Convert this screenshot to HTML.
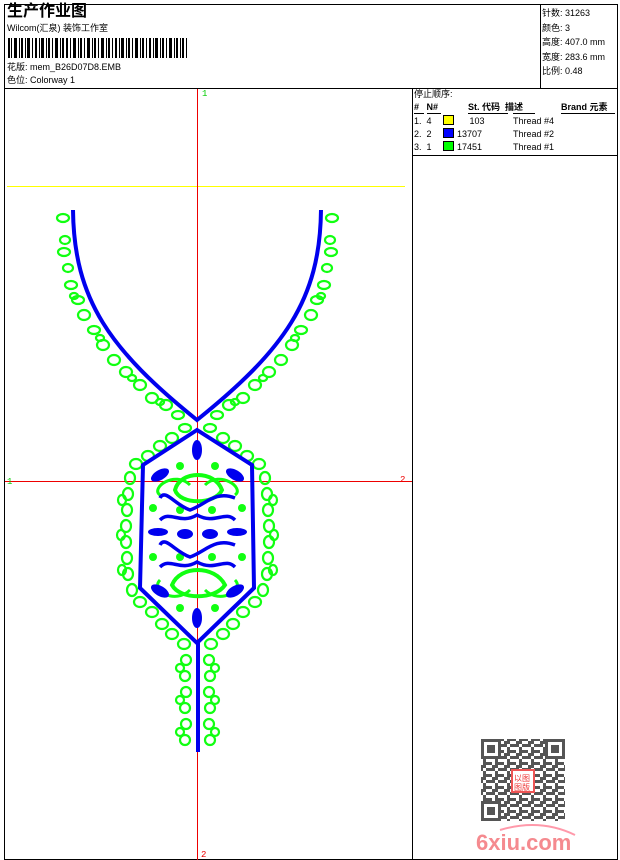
<!DOCTYPE html>
<html><head><meta charset="utf-8"><style>
body{margin:0;background:#fff;width:620px;height:860px;position:relative;overflow:hidden;font-family:"Liberation Sans","Noto Sans CJK SC",sans-serif;color:#000}
.a{position:absolute;white-space:nowrap;font-size:9px;line-height:11px}
</style></head><body>
<svg width="620" height="860" style="position:absolute;left:0;top:0">
<defs>
<pattern id="qr" x="0" y="0" width="12" height="12" patternUnits="userSpaceOnUse">
<rect x="0" y="0" width="3" height="3" fill="#555"/><rect x="6" y="0" width="6" height="3" fill="#555"/><rect x="3" y="3" width="3" height="6" fill="#555"/><rect x="9" y="6" width="3" height="3" fill="#555"/><rect x="0" y="9" width="6" height="3" fill="#555"/><rect x="6" y="6" width="3" height="3" fill="#555"/>
</pattern>
</defs>
<rect x="4.5" y="4.5" width="613" height="855" fill="none" stroke="#000"/>
<line x1="4" y1="88.5" x2="618" y2="88.5" stroke="#000"/>
<line x1="540.5" y1="4" x2="540.5" y2="88" stroke="#000"/>
<line x1="412.5" y1="88" x2="412.5" y2="860" stroke="#000"/>
<line x1="412" y1="155.5" x2="618" y2="155.5" stroke="#000"/>
<line x1="7" y1="186.5" x2="405" y2="186.5" stroke="#ff0" />
<line x1="197.5" y1="89" x2="197.5" y2="860" stroke="#e00"/>
<line x1="5" y1="481.5" x2="412" y2="481.5" stroke="#e00"/>
<g fill="#000">
<rect x="8" y="38" width="2" height="20"/><rect x="11" y="38" width="1" height="20"/><rect x="14" y="38" width="3" height="20"/><rect x="19" y="38" width="1" height="20"/><rect x="21" y="38" width="2" height="20"/><rect x="25" y="38" width="1" height="20"/><rect x="27" y="38" width="3" height="20"/><rect x="32" y="38" width="1" height="20"/><rect x="35" y="38" width="2" height="20"/><rect x="39" y="38" width="1" height="20"/><rect x="41" y="38" width="3" height="20"/><rect x="46" y="38" width="1" height="20"/><rect x="48" y="38" width="2" height="20"/><rect x="52" y="38" width="1" height="20"/><rect x="55" y="38" width="3" height="20"/><rect x="60" y="38" width="1" height="20"/><rect x="62" y="38" width="2" height="20"/><rect x="66" y="38" width="2" height="20"/><rect x="70" y="38" width="1" height="20"/><rect x="73" y="38" width="3" height="20"/><rect x="78" y="38" width="1" height="20"/><rect x="80" y="38" width="2" height="20"/><rect x="84" y="38" width="1" height="20"/><rect x="87" y="38" width="3" height="20"/><rect x="92" y="38" width="1" height="20"/><rect x="94" y="38" width="2" height="20"/><rect x="98" y="38" width="1" height="20"/><rect x="101" y="38" width="3" height="20"/><rect x="106" y="38" width="1" height="20"/><rect x="108" y="38" width="2" height="20"/><rect x="112" y="38" width="1" height="20"/><rect x="115" y="38" width="2" height="20"/><rect x="119" y="38" width="1" height="20"/><rect x="121" y="38" width="3" height="20"/><rect x="126" y="38" width="1" height="20"/><rect x="128" y="38" width="2" height="20"/><rect x="132" y="38" width="1" height="20"/><rect x="135" y="38" width="3" height="20"/><rect x="140" y="38" width="1" height="20"/><rect x="142" y="38" width="2" height="20"/><rect x="146" y="38" width="1" height="20"/><rect x="149" y="38" width="2" height="20"/><rect x="153" y="38" width="1" height="20"/><rect x="155" y="38" width="3" height="20"/><rect x="160" y="38" width="1" height="20"/><rect x="162" y="38" width="2" height="20"/><rect x="166" y="38" width="1" height="20"/><rect x="169" y="38" width="3" height="20"/><rect x="174" y="38" width="1" height="20"/><rect x="176" y="38" width="2" height="20"/><rect x="180" y="38" width="1" height="20"/><rect x="182" y="38" width="2" height="20"/><rect x="186" y="38" width="1" height="20"/>
</g>
<rect x="443.5" y="115.5" width="10" height="9" fill="#ff0" stroke="#000"/>
<rect x="443.5" y="128.5" width="10" height="9" fill="#00f" stroke="#000"/>
<rect x="443.5" y="141.5" width="10" height="9" fill="#0f0" stroke="#000"/>
<line x1="414" y1="113.5" x2="424" y2="113.5" stroke="#000"/>
<line x1="427" y1="113.5" x2="441" y2="113.5" stroke="#000"/>
<line x1="468" y1="113.5" x2="508" y2="113.5" stroke="#000"/>
<line x1="513" y1="113.5" x2="535" y2="113.5" stroke="#000"/>
<line x1="561" y1="113.5" x2="615" y2="113.5" stroke="#000"/>
<text x="202" y="96" font-size="9" fill="#0c0" font-family="Liberation Mono">1</text>
<text x="201" y="857" font-size="9" fill="#e00" font-family="Liberation Mono">2</text>
<text x="7" y="484" font-size="9" fill="#0c0" font-family="Liberation Mono">1</text>
<text x="400" y="482" font-size="9" fill="#e00" font-family="Liberation Mono">2</text>
<g fill="none" stroke="#1f1" stroke-width="2.2">
<g id="L">
<ellipse cx="63" cy="218" rx="6" ry="4"/><ellipse cx="65" cy="240" rx="5" ry="4"/><ellipse cx="64" cy="252" rx="6" ry="4"/><ellipse cx="68" cy="268" rx="5" ry="4"/><ellipse cx="71" cy="285" rx="6" ry="4"/><ellipse cx="78" cy="300" rx="6" ry="4"/><ellipse cx="84" cy="315" rx="6" ry="5"/><ellipse cx="94" cy="330" rx="6" ry="4"/><ellipse cx="103" cy="345" rx="6" ry="5"/><ellipse cx="114" cy="360" rx="6" ry="5"/><ellipse cx="126" cy="372" rx="6" ry="5"/><ellipse cx="140" cy="385" rx="6" ry="5"/><ellipse cx="152" cy="398" rx="6" ry="5"/><ellipse cx="166" cy="405" rx="6" ry="5"/><ellipse cx="178" cy="415" rx="6" ry="4"/>
<ellipse cx="74" cy="296" rx="4" ry="3"/><ellipse cx="100" cy="338" rx="4" ry="3"/><ellipse cx="132" cy="378" rx="4" ry="3"/><ellipse cx="160" cy="402" rx="4" ry="3"/>
</g>
<use href="#L" transform="translate(395,0) scale(-1,1)"/>
<g id="P">
<ellipse cx="185" cy="428" rx="6" ry="4"/><ellipse cx="172" cy="438" rx="6" ry="5"/><ellipse cx="160" cy="446" rx="6" ry="5"/><ellipse cx="148" cy="456" rx="6" ry="5"/><ellipse cx="136" cy="464" rx="6" ry="5"/><ellipse cx="130" cy="478" rx="5" ry="6"/><ellipse cx="128" cy="494" rx="5" ry="6"/><ellipse cx="127" cy="510" rx="5" ry="6"/><ellipse cx="126" cy="526" rx="5" ry="6"/><ellipse cx="126" cy="542" rx="5" ry="6"/><ellipse cx="127" cy="558" rx="5" ry="6"/><ellipse cx="128" cy="574" rx="5" ry="6"/><ellipse cx="132" cy="590" rx="5" ry="6"/><ellipse cx="140" cy="602" rx="6" ry="5"/><ellipse cx="152" cy="612" rx="6" ry="5"/><ellipse cx="162" cy="624" rx="6" ry="5"/><ellipse cx="172" cy="634" rx="6" ry="5"/><ellipse cx="184" cy="644" rx="6" ry="5"/>
<ellipse cx="186" cy="660" rx="5" ry="5"/><ellipse cx="185" cy="676" rx="5" ry="5"/><ellipse cx="186" cy="692" rx="5" ry="5"/><ellipse cx="185" cy="708" rx="5" ry="5"/><ellipse cx="186" cy="724" rx="5" ry="5"/><ellipse cx="185" cy="740" rx="5" ry="5"/>
<ellipse cx="122" cy="500" rx="4" ry="5"/><ellipse cx="121" cy="535" rx="4" ry="5"/><ellipse cx="122" cy="570" rx="4" ry="5"/><ellipse cx="180" cy="668" rx="4" ry="4"/><ellipse cx="180" cy="700" rx="4" ry="4"/><ellipse cx="180" cy="732" rx="4" ry="4"/>
</g>
<use href="#P" transform="translate(395,0) scale(-1,1)"/>
<path d="M175 490 C180 470 215 470 222 490 C215 505 180 505 175 490 Z" stroke-width="4"/>
<path d="M172 585 C180 565 215 565 225 585 C215 600 180 600 172 585 Z" stroke-width="4"/>
<path d="M160 495 C150 488 175 470 190 485 M235 495 C245 488 220 470 205 485 M160 580 C150 590 175 605 190 590 M235 580 C245 590 220 605 205 590" stroke-width="3"/>
</g>
<g fill="#1f1"><circle cx="180" cy="466" r="4"/><circle cx="215" cy="466" r="4"/><circle cx="153" cy="508" r="4"/><circle cx="242" cy="508" r="4"/><circle cx="180" cy="510" r="4"/><circle cx="212" cy="510" r="4"/><circle cx="153" cy="557" r="4"/><circle cx="242" cy="557" r="4"/><circle cx="180" cy="557" r="4"/><circle cx="212" cy="557" r="4"/><circle cx="180" cy="608" r="4"/><circle cx="215" cy="608" r="4"/></g>
<g fill="none" stroke="#00e" stroke-width="4">
<path d="M73 210 C74 300 110 350 197 420 C284 350 320 300 321 210"/>
<path d="M197 430 L143 465 L140 588 L197 643 L254 588 L252 465 Z"/>
<line x1="198" y1="643" x2="198" y2="752"/>
<path d="M160 498 C165 488 175 505 190 510 C205 505 215 490 235 498 M160 520 C170 510 180 525 197 515 C215 525 225 510 235 520" stroke-width="3.5"/>
<path d="M160 545 C165 535 175 552 190 557 C205 552 215 537 235 545 M160 567 C170 557 180 572 197 562 C215 572 225 557 235 567" stroke-width="3.5"/>
</g>
<g fill="#00e"><ellipse cx="197" cy="450" rx="5" ry="10"/><ellipse cx="160" cy="475" rx="10" ry="5" transform="rotate(-30 160 475)"/><ellipse cx="235" cy="475" rx="10" ry="5" transform="rotate(30 235 475)"/><ellipse cx="158" cy="532" rx="10" ry="4"/><ellipse cx="237" cy="532" rx="10" ry="4"/><ellipse cx="185" cy="534" rx="8" ry="5"/><ellipse cx="210" cy="534" rx="8" ry="5"/><ellipse cx="160" cy="591" rx="10" ry="5" transform="rotate(30 160 591)"/><ellipse cx="235" cy="591" rx="10" ry="5" transform="rotate(-30 235 591)"/><ellipse cx="197" cy="618" rx="5" ry="10"/></g>
<rect x="481" y="739" width="84" height="82" fill="url(#qr)"/>
<g fill="#555"><rect x="481" y="739" width="20" height="20"/><rect x="545" y="739" width="20" height="20"/><rect x="481" y="801" width="20" height="20"/></g>
<g fill="#fff"><rect x="484" y="742" width="14" height="14"/><rect x="548" y="742" width="14" height="14"/><rect x="484" y="804" width="14" height="14"/></g>
<g fill="#555"><rect x="487" y="745" width="8" height="8"/><rect x="551" y="745" width="8" height="8"/><rect x="487" y="807" width="8" height="8"/></g>
<rect x="512" y="770" width="22" height="22" fill="#fff" stroke="#e55" stroke-width="2"/>
<text x="514" y="781" font-size="8" fill="#e33">以图</text><text x="514" y="790" font-size="8" fill="#e33">图版</text>
<path d="M500 830 Q540 818 575 835" fill="none" stroke="#f9a" stroke-width="2"/>
<text x="476" y="850" font-size="22" font-weight="bold" fill="#f58a8f" font-family="Liberation Sans">6xiu.com</text>
</svg>
<div class="a" style="left:7px;top:2px;font-size:16px;line-height:20px;font-weight:bold">生产作业图</div>
<div class="a" style="left:7px;top:23px">Wilcom(汇泉) 装饰工作室</div>
<div class="a" style="left:7px;top:62px">花版: mem_B26D07D8.EMB</div>
<div class="a" style="left:7px;top:75px">色位: Colorway 1</div>
<div class="a" style="left:542px;top:6px;line-height:14.5px">针数: 31263<br>颜色: 3<br>高度: 407.0 mm<br>宽度: 283.6 mm<br>比例: 0.48</div>
<div class="a" style="left:414px;top:89px">停止顺序:</div>
<div class="a" style="left:414px;top:102px;font-weight:bold">#&nbsp;&nbsp; N#</div>
<div class="a" style="left:468px;top:102px;font-weight:bold">St. 代码&nbsp; 描述</div>
<div class="a" style="left:561px;top:102px;font-weight:bold">Brand 元素</div>
<div class="a" style="left:414px;top:115px;line-height:13px">1.&nbsp; 4<br>2.&nbsp; 2<br>3.&nbsp; 1</div>
<div class="a" style="left:457px;top:115px;line-height:13px">&nbsp;&nbsp;&nbsp;&nbsp; 103<br>13707<br>17451</div>
<div class="a" style="left:513px;top:115px;line-height:13px">Thread #4<br>Thread #2<br>Thread #1</div>
</body></html>
